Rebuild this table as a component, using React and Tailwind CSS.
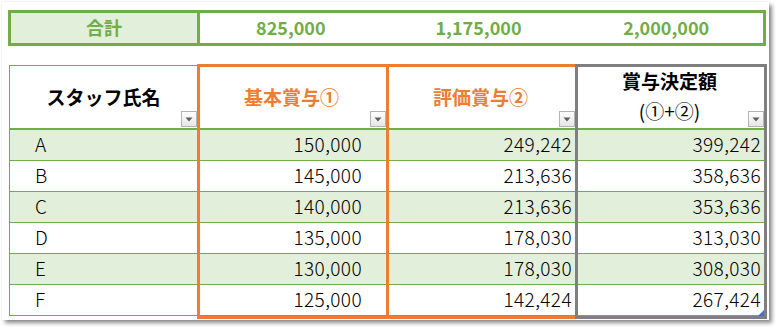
import React from "react";

const rows = [
  ["A", "150,000", "249,242", "399,242"],
  ["B", "145,000", "213,636", "358,636"],
  ["C", "140,000", "213,636", "353,636"],
  ["D", "135,000", "178,030", "313,030"],
  ["E", "130,000", "178,030", "308,030"],
  ["F", "125,000", "142,424", "267,424"],
];

function Drop() {
  return (
    <div className="absolute right-0 bottom-[1px] w-[16px] h-[16px] border border-[#b4b4b4] bg-gradient-to-b from-[#ffffff] to-[#e6e6e6] flex items-center justify-center">
      <svg width="8" height="5" viewBox="0 0 8 5">
        <path d="M0.5 0.5 L7.5 0.5 L4 4.5 Z" fill="#5f5f5f" />
      </svg>
    </div>
  );
}

export default function App() {
  return (
    <div
      className="w-[779px] h-[329px] bg-white overflow-hidden"
      style={{ fontFamily: '"Noto Sans CJK JP", "Noto Sans", sans-serif' }}
    >
      <div className="ml-[2px] mt-[2px] w-[767px] h-[318px] bg-white shadow-[3px_3px_4px_rgba(0,0,0,0.45),0_0_2px_rgba(0,0,0,0.08)] pt-[8px] pl-[6px]">
        {/* summary */}
        <div className="w-[758px] h-[36px] border-[3px] border-[#70ad47] grid grid-cols-[189px_1fr_1fr_1fr] text-[#70ad47] font-bold text-[18px] leading-none">
          <div className="bg-[#e2efda] border-r-[3px] border-[#70ad47] flex items-center justify-center pb-[3px]">合計</div>
          <div className="flex items-center justify-center pr-[6px] pb-[3px]">825,000</div>
          <div className="flex items-center justify-center pr-[6px] pb-[3px]">1,175,000</div>
          <div className="flex items-center justify-center pr-[6px] pb-[3px]">2,000,000</div>
        </div>

        {/* table */}
        <div className="relative mt-[19px] ml-[1px] w-[755px] text-[19px] text-black">
          <div className="border-l border-[#70ad47]">
            <div className="grid grid-cols-[187px_189px_189px_189px] h-[65px] border-t border-b-2 border-[#70ad47] font-bold leading-none">
              <div className="relative flex items-center justify-center pb-[1px]">
                スタッフ氏名
                <Drop />
              </div>
              <div className="relative flex items-center justify-center text-[#ed7d31] pb-[1px]">
                基本賞与①
                <Drop />
              </div>
              <div className="relative flex items-center justify-center text-[#ed7d31] pb-[1px]">
                評価賞与②
                <Drop />
              </div>
              <div className="relative flex flex-col items-center justify-center leading-[30px] pb-[2px]">
                <span>賞与決定額</span>
                <span className="font-normal">(①+②)</span>
                <Drop />
              </div>
            </div>
            {rows.map((r, i) => (
              <div
                key={r[0]}
                className={`grid grid-cols-[187px_189px_189px_189px] h-[31px] border-b border-[#70ad47] leading-none font-light tracking-[0.4px] ${
                  i % 2 === 0 ? "bg-[#e2efda]" : "bg-white"
                }`}
              >
                <div className="flex items-center pl-[25px] pb-[3px]">{r[0]}</div>
                <div className="flex items-center justify-end pr-[24px] pb-[3px]">{r[1]}</div>
                <div className="flex items-center justify-end pr-[3px] pb-[3px]">{r[2]}</div>
                <div className="flex items-center justify-end pr-[3px] pb-[3px]">{r[3]}</div>
              </div>
            ))}
          </div>

          {/* range highlight overlays */}
          <div className="absolute left-[188px] top-[-1px] w-[192px] h-[255px] border-[3px] border-[#ed7d31] pointer-events-none" />
          <div className="absolute left-[377px] top-[-1px] w-[192px] h-[255px] border-[3px] border-[#ed7d31] pointer-events-none" />
          <div className="absolute left-[566px] top-[-1px] w-[192px] h-[255px] border-[3px] border-[#7f7f7f] pointer-events-none" />
          <svg className="absolute left-[749px] top-[245px]" width="6" height="6" viewBox="0 0 6 6">
            <path d="M6 0 L6 6 L0 6 Z" fill="#4472c4" />
          </svg>
        </div>
      </div>
    </div>
  );
}
